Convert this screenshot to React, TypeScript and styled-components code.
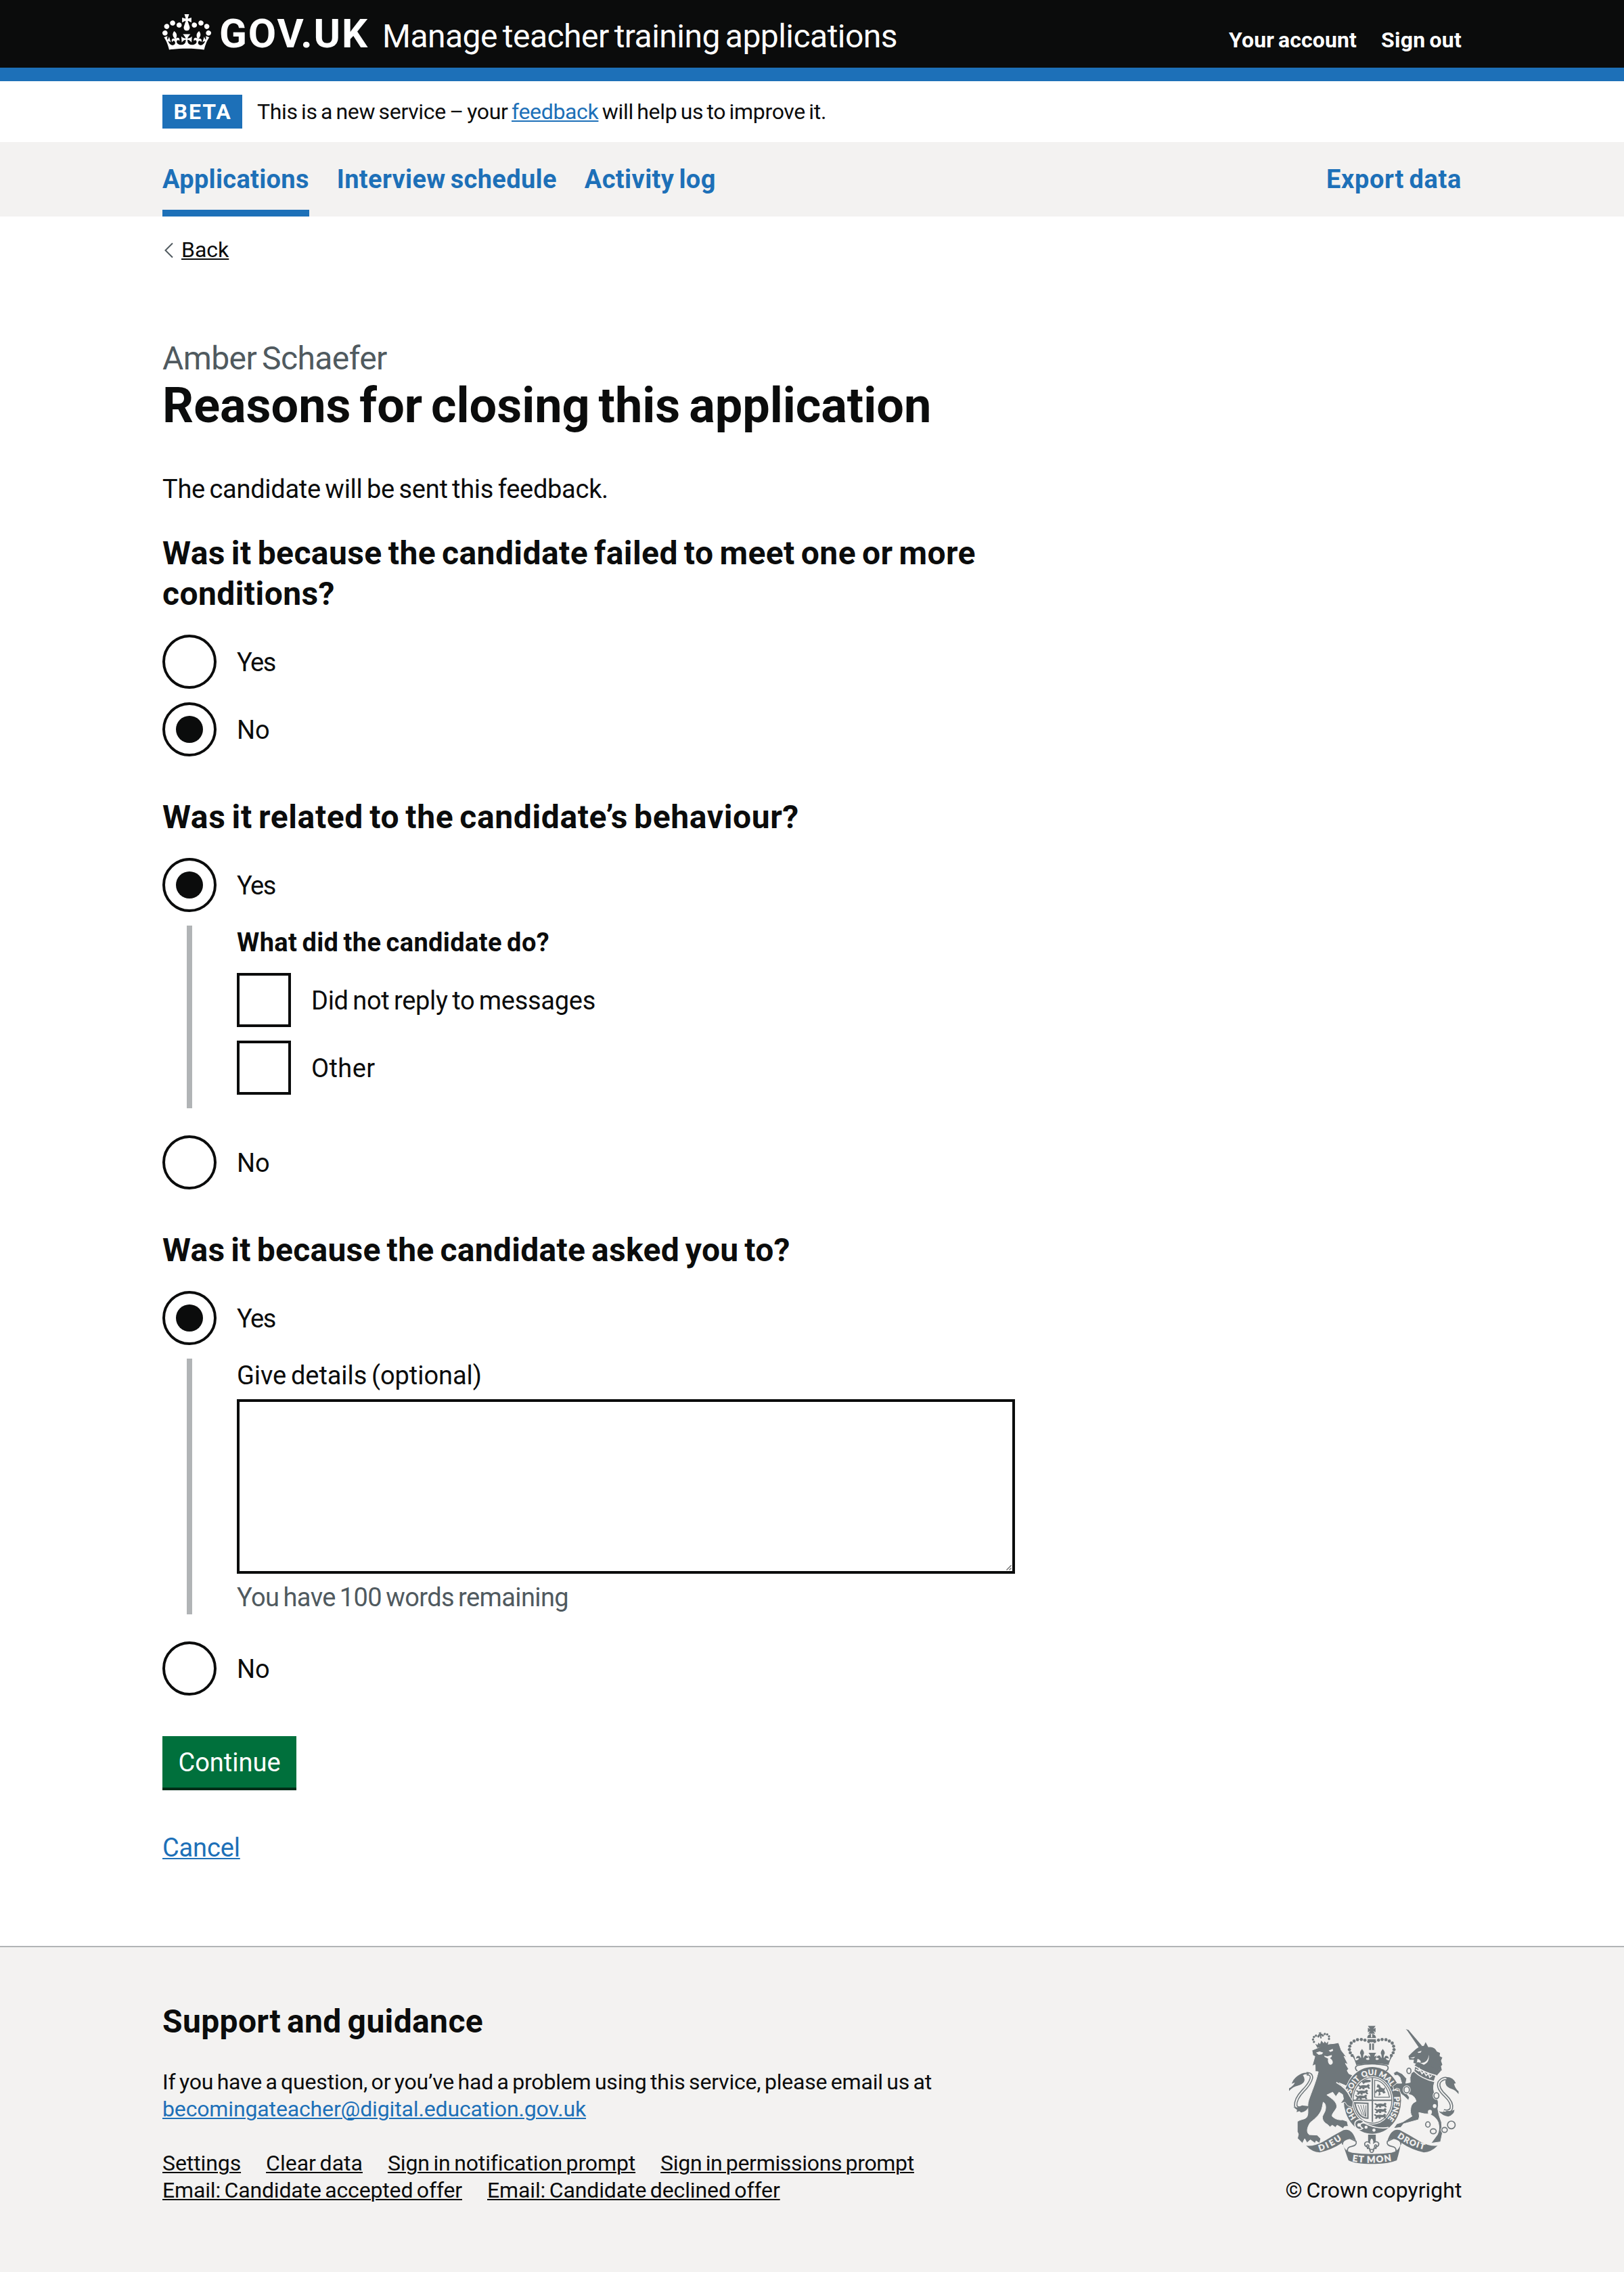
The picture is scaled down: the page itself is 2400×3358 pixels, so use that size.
import React from "react";
import styled, { createGlobalStyle, css } from "styled-components";

const ink = "#0b0c0c";
const blue = "#1d70b8";
const paper = "#f3f2f1";
const grey = "#505a5f";
const rule = "#b1b4b6";
const crest = "#6f777b";

const GlobalStyle = createGlobalStyle`
  * { box-sizing: border-box; word-spacing: -0.07em; }
  body {
    margin: 0;
    background: #fff;
    color: ${ink};
    font-family: Roboto, "Liberation Sans", Arial, sans-serif;
    font-size: 38px;
    line-height: 50px;
  }
  h1, h2, p, ul, fieldset, legend { margin: 0; padding: 0; border: 0; }
  ul { list-style: none; }
`;

const Page = styled.div`
  min-height: 3358px;
  display: flex;
  flex-direction: column;
`;

const Container = styled.div`
  width: 1920px;
  margin: 0 auto;
`;

const tracked = css<{ $track?: number }>`
  letter-spacing: ${(p) => p.$track ?? 0}em;
`;

/* Header */
const HeaderBar = styled.header`
  background: #0b0c0c;
  border-bottom: 20px solid ${blue};
`;
const HeaderInner = styled(Container)`
  height: 100px;
  padding-top: 20px;
  display: flex;
  align-items: baseline;
  color: #fff;
`;
const Crown = styled.svg`
  width: 72px;
  height: 53px;
  margin: 1px 12px 0 0;
  align-self: flex-start;
  fill: #fff;
`;
const Logotype = styled.span`
  font-size: 60px;
  line-height: 60px;
  font-weight: 700;
  letter-spacing: 0.032em;
`;
const ServiceName = styled.span`
  margin-left: 20px;
  font-size: 48px;
  line-height: 60px;
  letter-spacing: -0.0112em;
`;
const AccountNav = styled.nav`
  margin-left: auto;
  display: flex;
  gap: 36px;
`;
const AccountLink = styled.a`
  font-size: 32px;
  line-height: 40px;
  font-weight: 700;
  ${tracked}
`;

/* Phase banner */
const PhaseBanner = styled(Container)`
  height: 90px;
  display: flex;
  align-items: center;
  font-size: 32px;
  line-height: 40px;
`;
const Tag = styled.strong`
  width: 118px;
  height: 50px;
  margin-right: 22px;
  background: ${blue};
  color: #fff;
  text-align: center;
  line-height: 50px;
  letter-spacing: 0.06em;
  text-indent: 0.04em;
`;
const PhaseText = styled.span`
  letter-spacing: -0.0103em;
`;

const Link = styled.a<{ $dark?: boolean; $track?: number }>`
  color: ${(p) => (p.$dark ? ink : blue)};
  text-decoration: underline;
  text-decoration-thickness: 2px;
  text-underline-offset: 2px;
  ${(p) => p.$track !== undefined && tracked}
`;

/* Primary navigation */
const NavBar = styled.nav`
  background: ${paper};
`;
const NavInner = styled(Container)`
  height: 110px;
  display: flex;
  gap: 41px;
`;
const NavLink = styled.a<{ $current?: boolean; $end?: boolean; $track?: number }>`
  height: 110px;
  padding-top: 30px;
  color: ${blue};
  font-weight: 700;
  border-bottom: 10px solid ${(p) => (p.$current ? blue : "transparent")};
  ${(p) => p.$end && "margin-left: auto;"}
  ${tracked}
`;

const BackRow = styled(Container)`
  padding: 29px 0 0 2px;
  height: 180px;
  display: flex;
  align-items: flex-start;
  font-size: 32px;
  line-height: 40px;
`;
const Chevron = styled.svg`
  width: 14px;
  height: 24px;
  margin: 9px 12px 0 0;
  fill: none;
  stroke: ${grey};
  stroke-width: 2px;
`;

/* Main column */
const Main = styled(Container)`
  padding-right: 660px;
  display: flex;
  flex-direction: column;
  align-items: flex-start;
`;
const Caption = styled.span`
  display: block;
  font-size: 48px;
  line-height: 60px;
  font-weight: 400;
  color: ${grey};
  letter-spacing: -0.0125em;
`;
const Title = styled.h1`
  font-size: 72px;
  line-height: 80px;
  font-weight: 700;
  margin-bottom: 58px;
`;
const Lede = styled.p`
  letter-spacing: -0.0072em;
  margin-bottom: 40px;
`;

const Question = styled.fieldset`
  width: 100%;
  min-width: 0;
  margin-bottom: 60px;
`;
const QuestionTitle = styled.legend<{ $track?: number }>`
  font-size: 48px;
  line-height: 60px;
  font-weight: 700;
  margin-bottom: 30px;
  ${tracked}
`;
const Choices = styled.div`
  display: flex;
  flex-direction: column;
  gap: 20px;
`;
const Choice = styled.label`
  height: 80px;
  display: flex;
  align-items: center;
  gap: 30px;
`;
const RadioMark = styled.span`
  width: 80px;
  height: 80px;
  border: 4px solid ${ink};
  border-radius: 50%;
  display: flex;
  align-items: center;
  justify-content: center;
`;
const RadioDot = styled.span`
  width: 40px;
  height: 40px;
  border-radius: 50%;
  background: ${ink};
`;
const CheckMark = styled.span`
  width: 80px;
  height: 80px;
  border: 4px solid ${ink};
`;
const ChoiceText = styled.span<{ $track?: number }>`
  padding-top: 2px;
  ${tracked}
`;
const Conditional = styled.div`
  margin: 0 0 20px 36px;
  padding-left: 66px;
  border-left: 8px solid ${rule};
`;
const SubTitle = styled.p`
  font-weight: 700;
  letter-spacing: 0.01em;
  margin-bottom: 20px;
`;
const CheckList = styled(Choices)`
  padding-bottom: 20px;
`;
const FieldLabel = styled.label`
  display: block;
  letter-spacing: -0.0015em;
  margin-bottom: 10px;
`;
const TextAreaFrame = styled.div`
  position: relative;
  width: 1150px;
  height: 258px;
  margin-bottom: 10px;
`;
const TextArea = styled.textarea`
  display: block;
  width: 100%;
  height: 100%;
  border: 4px solid ${ink};
  border-radius: 0;
  background: #fff;
  resize: none;
`;
const Grip = styled.svg`
  position: absolute;
  right: 5px;
  bottom: 5px;
  width: 8px;
  height: 8px;
  stroke: #6b6b6b;
  stroke-width: 1.4px;
`;
const CountHint = styled.p`
  color: ${grey};
  letter-spacing: -0.0162em;
`;

const Button = styled.button`
  width: 198px;
  height: 80px;
  padding: 2px 0 0;
  border: 0;
  border-bottom: 4px solid #002d18;
  background: #00703c;
  color: #fff;
  font: inherit;
  margin-bottom: 60px;
`;

/* Footer */
const FooterBar = styled.footer`
  flex: 1;
  margin-top: 120px;
  border-top: 2px solid ${rule};
  background: ${paper};
`;
const FooterInner = styled(Container)`
  padding-top: 80px;
  display: flex;
  justify-content: space-between;
  font-size: 32px;
  line-height: 40px;
`;
const FooterTitle = styled.h2`
  font-size: 48px;
  line-height: 60px;
  letter-spacing: 0.0075em;
  margin-bottom: 39px;
`;
const FooterText = styled.p`
  letter-spacing: -0.0062em;
  margin-bottom: 40px;
`;
const FooterLinks = styled.ul`
  width: 1200px;
  display: flex;
  flex-wrap: wrap;
  column-gap: 37px;
`;
const Copyright = styled.div`
  width: 260px;
  padding-top: 36px;
  display: flex;
  flex-direction: column;
  align-items: center;
  white-space: nowrap;
`;
const CrestArt = styled.svg`
  width: 251px;
  height: 205px;
  margin-bottom: 18px;
`;
const CopyrightText = styled.span`
  letter-spacing: 0.001em;
`;

function Radio({ label, checked }: { label: "Yes" | "No"; checked?: boolean }) {
  return (
    <Choice>
      <RadioMark>{checked && <RadioDot />}</RadioMark>
      <ChoiceText $track={label === "Yes" ? -0.04 : 0}>{label}</ChoiceText>
    </Choice>
  );
}

function Checkbox({ label, track }: { label: string; track: number }) {
  return (
    <Choice>
      <CheckMark />
      <ChoiceText $track={track}>{label}</ChoiceText>
    </Choice>
  );
}

function CrownLogo() {
  return (
    <Crown viewBox="0 0 132 97" preserveAspectRatio="none">
      <path
        fillRule="evenodd"
        d="M25 30.2c3.5 1.5 7.7-.2 9.1-3.7 1.5-3.6-.2-7.8-3.9-9.2-3.6-1.4-7.6.3-9.1 3.9-1.4 3.5.3 7.5 3.9 9zM9 39.5c3.6 1.5 7.8-.2 9.2-3.7 1.5-3.6-.2-7.8-3.9-9.1-3.6-1.5-7.6.2-9.1 3.8-1.4 3.5.3 7.5 3.8 9zM4.4 57.2c3.5 1.5 7.7-.2 9.1-3.8 1.5-3.6-.2-7.7-3.9-9.1-3.5-1.5-7.6.3-9.1 3.8-1.4 3.5.3 7.6 3.9 9.1zm38.3-21.4c3.5 1.5 7.7-.2 9.1-3.8 1.5-3.6-.2-7.7-3.9-9.1-3.6-1.5-7.6.3-9.1 3.8-1.3 3.6.4 7.7 3.9 9.1zm64.4-5.6c-3.6 1.5-7.8-.2-9.1-3.7-1.5-3.6.2-7.8 3.8-9.2 3.6-1.4 7.7.3 9.2 3.9 1.3 3.5-.4 7.5-3.9 9zm15.9 9.3c-3.6 1.5-7.7-.2-9.1-3.7-1.5-3.6.2-7.8 3.7-9.1 3.6-1.5 7.7.2 9.2 3.8 1.5 3.5-.3 7.5-3.8 9zm4.7 17.7c-3.6 1.5-7.8-.2-9.2-3.8-1.5-3.6.2-7.7 3.9-9.1 3.6-1.5 7.7.3 9.2 3.8 1.3 3.5-.4 7.6-3.9 9.1zM89.3 35.8c-3.6 1.5-7.8-.2-9.2-3.8-1.4-3.6.2-7.7 3.9-9.1 3.6-1.5 7.7.3 9.2 3.8 1.4 3.6-.3 7.7-3.9 9.1zM69.7 17.7l8.9 4.7V9.3l-8.9 2.8c-.2-.3-.5-.6-.9-.9L72.4 0H59.6l3.5 11.2c-.3.3-.6.5-.9.9l-8.8-2.8v13.1l8.8-4.7c.3.3.6.7.9.9l-5 15.4v.1c-.2.8-.4 1.6-.4 2.4 0 4.1 3.1 7.5 7 8.1h.2c.3 0 .7.1 1 .1.4 0 .7 0 1-.1h.2c4-.6 7.1-4.1 7.1-8.1 0-.8-.1-1.7-.4-2.4V34l-5.1-15.4c.4-.2.7-.6 1-.9zM66 92.8c16.9 0 32.8 1.1 47.1 3.2 4-16.9 8.9-26.7 14-33.5l-9.6-3.4c1 4.9 1.1 7.2 0 10.2-1.5-1.4-3-4.3-4.2-8.7L108.6 76c2.8-2 5-3.2 7.5-3.3-4.4 9.4-10 11.9-13.6 11.2-4.3-.8-6.3-4.6-5.6-7.9 1-4.7 5.7-5.9 8-.5 4.3-8.7-3-11.4-7.6-8.8 7.1-7.2 7.9-13.5 2.1-21.1-8 6.1-8.1 12.3-4.5 20.8-4.7-5.4-12.1-2.5-9.5 6.2 3.4-5.2 7.9-2 7.2 3.1-.6 4.3-6.4 7.8-13.5 7.2-10.3-.9-10.9-8-11.2-13.8 2.5-.5 7.1 1.8 11 7.3L80.2 60c-4.1 4.4-8 5.3-12.3 5.4 1.4-4.4 8-11.6 8-11.6H55.5s6.4 7.2 7.9 11.6c-4.2-.1-8-1-12.3-5.4l1.4 16.4c3.9-5.5 8.5-7.7 10.9-7.3-.3 5.8-.9 12.8-11.1 13.8-7.2.6-12.9-2.9-13.5-7.2-.7-5 3.8-8.3 7.1-3.1 2.7-8.7-4.6-11.6-9.4-6.2 3.7-8.5 3.6-14.7-4.6-20.8-5.8 7.6-5 13.9 2.2 21.1-4.7-2.6-11.9.1-7.7 8.8 2.3-5.5 7.1-4.2 8.1.5.7 3.3-1.3 7.1-5.7 7.9-3.5.7-9-1.8-13.5-11.2 2.5.1 4.7 1.3 7.5 3.3l-4.7-15.4c-1.2 4.4-2.7 7.2-4.3 8.7-1.1-3-.9-5.3 0-10.2l-9.5 3.4c5 6.9 9.9 16.7 14 33.5 14.8-2.1 30.8-3.2 47.7-3.2z"
      />
    </Crown>
  );
}

const archDots: [number, number][] = [
  [424, 141], [407, 135], [391, 132], [374, 133], [359, 139], [346, 148], [340, 162], [338, 177], [342, 191], [350, 203],
];
const garterWords: [string, number][] = [
  ["HO", 12.5], ["SOIT", 29.5], ["QUI", 43], ["MAL", 54], ["Y", 66.5], ["PENSE", 72.5],
];
const chainRings: [number, number, number, number][] = [
  [602, 271, 9, 12], [592, 355, 12, 14], [724, 381, 11, 13], [686, 509, 10, 12], [710, 539, 13, 11], [760, 533, 12, 11], [790, 511, 17, 17],
];
const lionCrownDots: [number, number][] = [
  [180, 136], [178, 125], [184, 115], [194, 111], [204, 116], [224, 116], [234, 111], [244, 115], [250, 125], [248, 136],
];

function PassantLion({ x, y }: { x: number; y: number }) {
  return (
    <path
      transform={`translate(${x} ${y})`}
      d="M0 3q8 -6 12 2q14 -5 28 -1l8 -6l7 5l-4 6l5 9l-8 1l-4 -6q-8 3 -14 1l2 6l-9 1l-3 -7l-7 7l-9 -2l6 -7q-4 -4 -10 -9z"
      fill={crest}
    />
  );
}

function RoyalArms() {
  return (
    <CrestArt viewBox="71 71 752 615" fill={crest} stroke="none">
      <defs>
        <path id="garter" d="M440 514A97 112 0 0 1 440 290A97 112 0 0 1 440 514" />
        <path id="ribbonLeft" d="M206 627Q262 610 318 566" />
        <path id="ribbonMid" d="M350 672Q436 686 528 669" />
        <path id="ribbonRight" d="M549 565Q604 606 684 624" />
      </defs>

      {/* imperial crown */}
      <path d="M420 72h34l-10 14 10 -6v20l-10 -6 8 12h-30l8 -12 -10 6v-20l10 6z" />
      <path d="M417 126a20 20 0 0 1 17 -19v16h5v-16a20 20 0 0 1 17 19z" />
      <path d="M418 131h38a20 20 0 0 1 -38 0z" />
      <path d="M426 150h8v28h-8zM439 150h8v28h-8z" />
      {archDots.map(([x, y]) => (
        <React.Fragment key={`${x}-${y}`}>
          <circle cx={x} cy={y} r="7" />
          <circle cx={874 - x} cy={y} r="7" />
        </React.Fragment>
      ))}
      <path d="M359 204l6 20q12 3 16 -8q-10 -3 -14 2q2 -17 16 -13l6 10q3 -12 -4 -22q0 -8 9 -19q9 11 9 19q-6 10 -3 22l7 -12q12 -2 16 11q-9 -2 -12 4q6 8 16 2l-6 -17l10 5q-2 -10 -8 -17h34q-7 7 -8 17l10 -5l-5 17q9 6 15 -2q-3 -6 -12 -4q4 -13 16 -11l7 12q3 -12 -3 -22q0 -8 9 -19q9 11 9 19q-7 10 -4 22l6 -10q14 -4 16 13q-4 -5 -14 -2q4 11 16 8l6 -20l7 3q-12 18 -16 38q-70 -12 -144 0q-4 -20 -16 -38z" />
      <path d="M374 247q64 -13 128 0q8 3 8 12q-1 9 -10 12M374 247q-9 3 -9 12q1 9 9 12" fill="none" stroke={crest} strokeWidth="5" />

      {/* garter and shield */}
      <ellipse cx="440" cy="402" rx="127" ry="148" />
      <ellipse cx="440" cy="402" rx="92" ry="107" fill={paper} />
      <ellipse cx="440" cy="402" rx="86" ry="101" fill="none" stroke={crest} strokeWidth="4" />
      <path d="M437 303h6v195h-6zM353 399h174v6h-174z" />
      <PassantLion x={374} y={332} />
      <PassantLion x={366} y={356} />
      <PassantLion x={362} y={378} />
      <path d="M392 318l20 -8 20 2v8l-24 4 -8 6z" />
      <PassantLion x={448} y={414} />
      <PassantLion x={448} y={438} />
      <PassantLion x={446} y={463} />
      <path d="M450 312q50 4 66 76h-66z" fill="none" stroke={crest} strokeWidth="4" />
      <path d="M463 330l10 4 4 10 12 6 8 -6 -4 14 6 10 -10 4 -6 -8 -10 2 4 10 -10 6 2 -16 -8 -4 -6 10 -4 -8 8 -10 8 0 2 -8 -10 -2z" />
      <path d="M362 413l58 2v66q-44 2 -58 -68z" fill="none" stroke={crest} strokeWidth="6" />
      <path d="M376 422l20 46M388 422l16 50M400 422l9 52M411 424v50" fill="none" stroke={crest} strokeWidth="3" />
      <g fill={paper} stroke={paper} strokeWidth="0.8" fontFamily="Lato, sans-serif" fontWeight="900" fontSize="34">
        {garterWords.map(([word, start]) => (
          <text key={word}>
            <textPath href="#garter" startOffset={`${start}%`}>{word}</textPath>
          </text>
        ))}
      </g>
      <path d="M363 500q8 -14 24 -12q16 4 16 14q-12 -2 -18 8q2 12 12 16q-10 10 -24 2q-14 -10 -10 -28z" fill={crest} stroke={paper} strokeWidth="5" />
      <circle cx="381" cy="511" r="8" fill={paper} />
      <path d="M396 498q60 34 116 24" fill="none" stroke={paper} strokeWidth="5" />
      <circle cx="412" cy="521" r="7" fill={paper} />
      <circle cx="447" cy="534" r="7" fill={paper} />

      {/* pendant */}
      <path d="M421 554h34v34h-34z" />
      <path d="M437 566q-12 10 -9 24q-14 -10 -22 2q-2 12 10 17q-2 -10 4 -10q6 2 4 10h-6v6h10q-2 12 9 18q11 -6 9 -18h10v-6h-6q-2 -8 4 -10q6 0 4 10q12 -5 10 -17q-8 -12 -22 -2q3 -14 -9 -24z" fill={paper} stroke={crest} strokeWidth="5" />
      <circle cx="437" cy="626" r="7" fill={paper} stroke={crest} strokeWidth="4" />

      {/* lion */}
      <path
        stroke={paper}
        strokeWidth="3"
        d="M200 275C190 320 170 365 158 400C148 430 160 455 150 475C142 488 118 485 107 497V540L112 552L108 570L130 592L140 572L150 590L165 577L186 592L190 582L206 592L211 572L195 556L160 554C148 545 148 525 165 500C190 480 212 462 218 430L222 410C232 415 236 430 230 450L220 470C215 480 222 500 240 508L252 520L262 512L276 522L284 512L310 527L316 518L333 517L328 495L308 488C290 490 275 485 262 473C258 462 275 450 282 432C284 410 262 395 238 378L264 366L278 385L292 366L308 376L312 396L298 416L318 410L330 426L352 434L354 408L340 384C332 355 310 340 292 324L325 338L338 312L352 290L336 284L328 270L334 262L320 238L332 242L314 206L326 211L302 180L290 146L270 150Q236 150 196 170L172 180L176 202L185 207L173 250L186 244L187 274Z"
      />
      <path d="M190 190l16 -5 16 5 -6 8 -14 2zM246 181l18 -7 2 8 -12 5zM226 204l14 3 20 -6 0 7 -8 7q14 8 12 22q-6 12 -16 4q-8 -12 -4 -24l-16 -8z" fill={paper} />
      <path d="M280 322q44 24 62 64" fill="none" stroke={paper} strokeWidth="5" />
      <path d="M148 284q22 -2 22 18q-6 26 -38 58q-34 36 -32 66q6 16 36 8" fill="none" stroke={crest} strokeWidth="15" />
      <path d="M148 284q22 -2 22 18q-6 26 -38 58q-34 36 -32 66q6 16 36 8" fill="none" stroke={paper} strokeWidth="6" />
      <path d="M158 281q-26 -6 -52 14q-16 12 -24 33l14 -5q-4 14 -26 26v12q18 -20 38 -24q20 -4 28 -16q8 -14 -4 -30q8 -8 26 -4zM88 430q14 8 40 -6l30 4q-6 22 -34 28l-8 -6 -12 4 2 -10z" />
      <g transform="rotate(-11 214 135)">
        <path d="M184 146l9 7 6 -10 6 8 8 -14 8 14 6 -8 6 10 10 -7 -6 19h-47zM190 168h47v4h-47z" />
        <path d="M208 100h12l-3 7 6 0v8h-6v12h-6v-12h-6v-8h6z" />
        {lionCrownDots.map(([x, y]) => (
          <circle key={x} cx={x} cy={y} r="5" />
        ))}
      </g>

      {/* unicorn */}
      <path d="M588 86l12 4 60 70 -14 8 -52 -76z" />
      <path d="M640 232L676 240L746 268L724 294L640 262L626 248Z" />
      <g stroke={paper} strokeWidth="3">
        <path d="M628 270L612 282Q604 300 608 322L588 326L592 306L572 284L548 272L534 280L538 292L552 290L562 300L570 326L548 326L530 340L536 356L548 348L560 352Q560 372 582 384L600 402L604 388L588 366L604 376Q628 380 634 406Q612 416 610 436Q606 460 616 472L574 498L548 506L534 526L566 522L578 506L644 488Q652 474 646 456Q672 464 690 462Q722 474 732 500Q740 530 728 554L700 592L742 586L750 548L746 498Q734 470 730 440Q738 404 720 380Q704 350 716 320Z" />
      </g>
      <path d="M634 174L652 162L668 160L676 144L688 166Q716 162 726 186L740 192L738 206L750 212L744 226L750 244L744 250L748 270L726 262Q700 254 676 246L648 244Q664 226 640 218L636 240L622 236L624 222L604 222L600 206L614 192Z" />
      <path d="M628 250q40 28 94 42l-8 26q-54 -10 -90 -46z" fill={crest} stroke={paper} strokeWidth="5" />
      <path d="M632 264l14 8 2 -10 12 22 8 -10 10 18 10 -10 6 18 10 -8" fill="none" stroke={paper} strokeWidth="5" />
      <path d="M640 188l18 -6 -4 8 -10 2zM652 236q34 2 38 -36q4 34 -22 44zM606 214l24 -6 -8 8z" fill={paper} />
      <path d="M786 312q-30 -18 -50 10q-10 26 28 60q32 30 26 56q-8 18 -34 10" fill="none" stroke={crest} strokeWidth="15" />
      <path d="M786 312q-30 -18 -50 10q-10 26 28 60q32 30 26 56q-8 18 -34 10" fill="none" stroke={paper} strokeWidth="6" />
      <path d="M760 300q36 -6 50 26l-8 2q4 20 20 34v12q-14 -18 -28 -22q-26 -6 -30 -26q-2 -16 6 -20zM804 444q-2 22 -28 30q-26 -4 -42 -24q22 8 36 -2q18 4 34 -4z" />
      {chainRings.map(([x, y, rx, ry]) => (
        <g key={x}>
          <ellipse cx={x} cy={y} rx={rx} ry={ry} fill={paper} stroke={paper} strokeWidth="11" />
          <ellipse cx={x} cy={y} rx={rx} ry={ry} fill="none" stroke={crest} strokeWidth="5" />
        </g>
      ))}
      <ellipse cx="716" cy="427" rx="8" ry="9" fill={paper} />
      <ellipse cx="695" cy="454" rx="9" ry="10" fill={paper} />

      {/* motto ribbon */}
      <path d="M308 598q-4 -20 30 -28l30 14q4 18 -20 22q-22 4 -18 22" fill={paper} stroke={crest} strokeWidth="5" />
      <path d="M566 598q4 -20 -30 -28l-30 14q-4 18 20 22q22 4 18 22" fill={paper} stroke={crest} strokeWidth="5" />
      <path d="M146 603Q180 608 224 584Q270 556 312 534Q352 524 368 584Q352 568 330 574Q314 578 306 590Q262 620 206 633Q174 632 146 603Z" />
      <path d="M729 603Q694 608 650 584Q604 556 562 534Q522 524 506 584Q522 568 544 574Q560 578 568 590Q612 620 668 633Q700 632 729 603Z" />
      <path d="M308 590Q314 628 350 634Q436 646 524 634Q560 628 566 590Q562 622 548 668Q510 684 436 684Q364 684 334 668Q320 630 308 590Z" />
      <g fill={paper} stroke={paper} strokeWidth="1" fontFamily="Lato, sans-serif" fontWeight="900" fontSize="40">
        <text fontSize="37"><textPath href="#ribbonLeft" textLength="112">DIEU</textPath></text>
        <text><textPath href="#ribbonMid" textLength="176">ET MON</textPath></text>
        <text fontSize="36"><textPath href="#ribbonRight" textLength="132">DROIT</textPath></text>
      </g>
    </CrestArt>
  );
}

export default function App() {
  return (
    <Page>
      <GlobalStyle />
      <HeaderBar>
        <HeaderInner>
          <CrownLogo />
          <Logotype>GOV.UK</Logotype>
          <ServiceName>Manage teacher training applications</ServiceName>
          <AccountNav>
            <AccountLink $track={0.0041}>Your account</AccountLink>
            <AccountLink $track={0.008}>Sign out</AccountLink>
          </AccountNav>
        </HeaderInner>
      </HeaderBar>

      <PhaseBanner>
        <Tag>BETA</Tag>
        <PhaseText>
          This is a new service – your <Link>feedback</Link> will help us to improve it.
        </PhaseText>
      </PhaseBanner>

      <NavBar>
        <NavInner>
          <NavLink $current $track={0.008}>Applications</NavLink>
          <NavLink $track={0.0089}>Interview schedule</NavLink>
          <NavLink $track={0.0097}>Activity log</NavLink>
          <NavLink $end $track={0.0169}>Export data</NavLink>
        </NavInner>
      </NavBar>

      <BackRow>
        <Chevron viewBox="0 0 14 24"><path d="M13 1.5L2.5 12L13 22.5" /></Chevron>
        <Link $dark>Back</Link>
      </BackRow>

      <Main as="main">
        <Title>
          <Caption>Amber Schaefer</Caption>
          Reasons for closing this application
        </Title>
        <Lede>The candidate will be sent this feedback.</Lede>

        <Question>
          <QuestionTitle $track={0.0089}>
            Was it because the candidate failed to meet one or more conditions?
          </QuestionTitle>
          <Choices>
            <Radio label="Yes" />
            <Radio label="No" checked />
          </Choices>
        </Question>

        <Question>
          <QuestionTitle $track={0.0129}>Was it related to the candidate’s behaviour?</QuestionTitle>
          <Choices>
            <Radio label="Yes" checked />
            <Conditional>
              <SubTitle>What did the candidate do?</SubTitle>
              <CheckList>
                <Checkbox label="Did not reply to messages" track={-0.0076} />
                <Checkbox label="Other" track={0.01} />
              </CheckList>
            </Conditional>
            <Radio label="No" />
          </Choices>
        </Question>

        <Question>
          <QuestionTitle $track={0.006}>Was it because the candidate asked you to?</QuestionTitle>
          <Choices>
            <Radio label="Yes" checked />
            <Conditional>
              <FieldLabel htmlFor="details">Give details (optional)</FieldLabel>
              <TextAreaFrame>
                <TextArea id="details" />
                <Grip viewBox="0 0 8 8"><path d="M0.5 7.5L7.5 0.5M4.5 7.5L7.5 4.5" /></Grip>
              </TextAreaFrame>
              <CountHint>You have 100 words remaining</CountHint>
            </Conditional>
            <Radio label="No" />
          </Choices>
        </Question>

        <Button type="button">Continue</Button>
        <Link $track={-0.004}>Cancel</Link>
      </Main>

      <FooterBar>
        <FooterInner>
          <div>
            <FooterTitle>Support and guidance</FooterTitle>
            <FooterText>
              If you have a question, or you’ve had a problem using this service, please email us at
              <br />
              <Link $track={-0.0044}>becomingateacher@digital.education.gov.uk</Link>
            </FooterText>
            <FooterLinks>
              <li><Link $dark $track={-0.003}>Settings</Link></li>
              <li><Link $dark $track={0}>Clear data</Link></li>
              <li><Link $dark $track={-0.004}>Sign in notification prompt</Link></li>
              <li><Link $dark $track={-0.01}>Sign in permissions prompt</Link></li>
              <li><Link $dark $track={-0.005}>Email: Candidate accepted offer</Link></li>
              <li><Link $dark $track={-0.004}>Email: Candidate declined offer</Link></li>
            </FooterLinks>
          </div>
          <Copyright>
            <RoyalArms />
            <CopyrightText>© Crown copyright</CopyrightText>
          </Copyright>
        </FooterInner>
      </FooterBar>
    </Page>
  );
}
